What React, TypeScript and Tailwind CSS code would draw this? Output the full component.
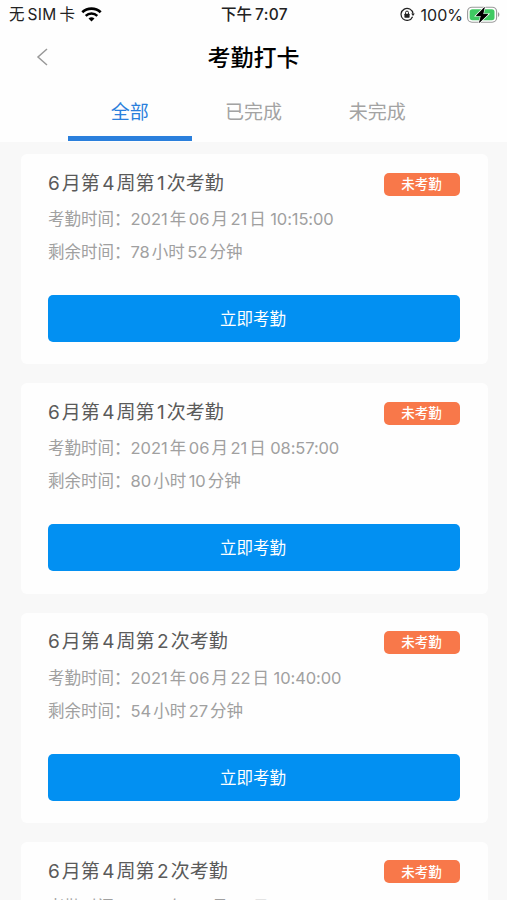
const records = [
  { id: 1, title: '6月第4周第1次考勤', time: '2021年06月21日 10:15:00', left: '78小时52分钟' },
  { id: 2, title: '6月第4周第1次考勤', time: '2021年06月21日 08:57:00', left: '80小时10分钟' },
  { id: 3, title: '6月第4周第2次考勤', time: '2021年06月22日 10:40:00', left: '54小时27分钟' },
  { id: 4, title: '6月第4周第2次考勤', time: '2021年06月22日 14:30:00', left: '58小时17分钟' },
];

const tabs = ['全部', '已完成', '未完成'];

// adds a little air between digits and Chinese characters
function Mixed({ text }: { text: string }) {
  return (
    <>
      {text.split(/( ?\d[\d:]*)/).map((part, i) => {
        if (i % 2 === 0) return part;
        if (part.includes(':')) return <span key={i} className="tracking-[-0.1px]">{part}</span>;
        return (
          <span key={i} className={i === 1 ? 'mr-[2px]' : 'mr-[2px] ml-[2.5px]'}>
            {part}
          </span>
        );
      })}
    </>
  );
}

function StatusBar() {
  return (
    <div className="grid h-7 grid-cols-[1fr_auto_1fr] items-center pl-[9px] pr-[7px] text-[16px] leading-7 text-[#222]">
      <div className="flex items-center">
        <span className="pt-px text-[15.5px] whitespace-nowrap">
          无<span className="mr-[3px] ml-[3px] tracking-[0.3px]">SIM</span>卡
        </span>
        <svg className="ml-[6px]" width="21" height="15" viewBox="0 0 21 15" fill="none" stroke="#000">
          <path d="M1.3 5.3a13.4 13.4 0 0 1 18.4 0" strokeWidth="2.7" />
          <path d="M4.7 8.9a8.5 8.5 0 0 1 11.6 0" strokeWidth="2.5" />
          <path d="M10.5 14.5 7.5 11.6a4.4 4.4 0 0 1 6 0z" fill="#000" stroke="none" />
        </svg>
      </div>
      <div className="pt-px text-center text-[15.5px] font-medium whitespace-nowrap">
        下午<span className="ml-[3px] tracking-[0.4px]">7:07</span>
      </div>
      <div className="flex items-center justify-end">
        <svg width="15" height="15" viewBox="0 0 15 15" fill="none" stroke="#222" strokeWidth="1.2">
          <path d="M12.6 9.7A6 6 0 1 1 13 6.6" />
          <path d="M11.2 6.4h3.6L13 9z" fill="#222" stroke="none" />
          <rect x="4.4" y="6.7" width="5.2" height="4" rx="0.6" fill="#222" stroke="none" />
          <path d="M5.5 7V5.6a1.5 1.5 0 0 1 3 0V7" strokeWidth="1" />
        </svg>
        <span className="ml-[6px] pt-px">100%</span>
        <svg className="ml-[4px]" width="33" height="18" viewBox="0 0 33 18">
          <rect x="0.6" y="1.2" width="29" height="15" rx="4.4" fill="#fff" stroke="#9b9b9b" strokeWidth="1.1" />
          <rect x="2.7" y="3.2" width="24.8" height="11" rx="2.6" fill="#3fca62" />
          <path d="M31 6.3v4.6c1.8-.6 1.8-4 0-4.6z" fill="#9b9b9b" />
          <path
            d="M17.4 1.4 9.2 9.7h4.9L12.4 16.6l8.6-8.3h-5.1z"
            fill="#000"
            stroke="#fff"
            strokeWidth="1.8"
            paintOrder="stroke"
          />
          <path d="M17.4 1.4 9.2 9.7h4.9L12.4 16.6l8.6-8.3h-5.1z" fill="#000" stroke="#000" strokeWidth="0.5" />
        </svg>
      </div>
    </div>
  );
}

function RecordCard({ title, time, left }: { title: string; time: string; left: string }) {
  return (
    <div className="h-[210.3px] shrink-0 rounded-md bg-[#fefefe] pt-[18px] pr-[28px] pl-[27px]">
      <div className="flex h-[24px] items-center justify-between">
        <h2 className="text-[19px] text-[#5a5a5a]">
          <Mixed text={title} />
        </h2>
        <span className="flex h-[23px] w-[76px] items-center justify-center rounded-[5px] bg-[#f8784a] pr-px text-[13.5px] font-medium text-white">
          未考勤
        </span>
      </div>
      <p className="mt-[7px] h-[33px] text-[16.5px] leading-[33px] text-[#a0a0a0]">
        考勤时间：
        <Mixed text={time} />
      </p>
      <p className="h-[33px] text-[16.5px] leading-[33px] text-[#a0a0a0]">
        剩余时间：
        <Mixed text={left} />
      </p>
      <button className="mt-[26px] block h-[47px] w-full rounded-[5px] bg-[#0290f2] pt-[2px] pr-[2px] text-[16.5px] text-white">
        立即考勤
      </button>
    </div>
  );
}

export default function App() {
  return (
    <div className="flex h-[900px] w-full flex-col overflow-hidden bg-[#f8f8f8] font-[Inter,'Noto_Sans_CJK_SC',sans-serif]">
      <header className="h-[142px] shrink-0 bg-[#fefefe]">
        <StatusBar />
        <div className="grid h-[58px] grid-cols-3 items-center">
          <svg className="ml-[36px]" width="13" height="18" viewBox="0 0 13 18" fill="none" stroke="#999" strokeWidth="1.5">
            <path d="M11 1 2 9l9 8" />
          </svg>
          <h1 className="pt-[2px] text-center text-[23px] font-medium text-black">考勤打卡</h1>
        </div>
        <nav className="flex h-[55px] px-[68px]">
          {tabs.map((tab, i) => (
            <div
              key={tab}
              className={
                i === 0
                  ? 'flex-1 border-b-[5px] border-[#2a7fdc] text-center text-[19px] leading-[53px] text-[#2a7fdc]'
                  : 'flex-1 text-center text-[19px] leading-[53px] text-[#a3a3a3]'
              }
            >
              {tab}
            </div>
          ))}
        </nav>
      </header>
      <main className="flex flex-col gap-[19px] pt-[12px] pr-[19px] pl-[21px]">
        {records.map((r) => (
          <RecordCard key={r.id} title={r.title} time={r.time} left={r.left} />
        ))}
      </main>
    </div>
  );
}
